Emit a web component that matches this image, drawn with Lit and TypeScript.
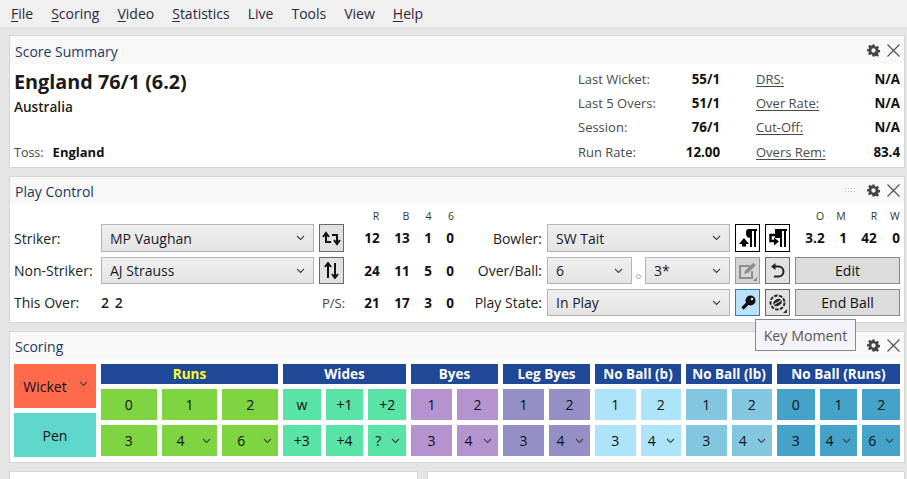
import { LitElement, html, css } from "lit";
import { customElement } from "lit/decorators.js";

const chev = html`<svg class="chev" width="9" height="6" viewBox="0 0 9 6"><path d="M1 1l3.5 3.5L8 1" fill="none" stroke="#444" stroke-width="1.1"/></svg>`;
const gear = html`<svg width="13" height="13" viewBox="0 0 24 24"><path fill="#444" fill-rule="evenodd" d="M10 1h4l.6 3.2 2 .8 2.700-1.800 2.800 2.800-1.800 2.700.8 2 3.200.6v4l-3.200.6-.8 2 1.800 2.700-2.800 2.800-2.700-1.800-2 .8L14 23h-4l-.6-3.200-2-.8-2.700 1.800-2.800-2.800 1.800-2.700-.8-2L0 13.700v-4l3.200-.6.8-2L2.200 4.400 5 1.600l2.700 1.800 1.700-.8zM12 8a4 4 0 100 8 4 4 0 000-8z"/></svg>`;
const closeX = html`<svg width="13" height="13" viewBox="0 0 13 13"><path d="M.5.500l12 12M12.500.500l-12 12" stroke="#555" stroke-width="1.200" fill="none"/></svg>`;

const swap = html`<svg width="19" height="15" viewBox="0 0 19 15"><path d="M1 6l3-4 3 4M4 3v8h5M18 9l-3 4-3-4M15 12V4h-5" fill="none" stroke="#111" stroke-width="2"/></svg>`;
const updown = html`<svg width="15" height="17" viewBox="0 0 15 17"><path d="M1 5l3-4 3 4M4 2v14M14 12l-3 4-3-4M11 15V1" fill="none" stroke="#111" stroke-width="2"/></svg>`;
const bowlA = html`<svg width="23" height="26" viewBox="0 0 23 26"><path fill="#000" d="M10 4h11v2h-1v16h-2V6h-2v16h-2V13a4.500 4.500 0 01-4-4.500V7a3 3 0 012-3z"/><path fill="#000" d="M8 13l5 6h-3v2.500H6V19H3z"/></svg>`;
const bowlB = html`<svg width="23" height="26" viewBox="0 0 23 26"><path fill="#000" d="M9 4h12v2h-1v16h-2V6h-2v16h-2V13H9z"/><path d="M9 10H4.500v6H8" fill="none" stroke="#000" stroke-width="2.400"/><path fill="#000" d="M8 12.500l5 4-5 4z"/></svg>`;
const editIc = html`<svg width="19" height="18" viewBox="0 0 19 18"><path d="M12 4H2v12h12V9" fill="none" stroke="#8d8d8d" stroke-width="2"/><path d="M6 12l1-3 8-8 3 2-8 8z" fill="#8d8d8d"/></svg>`;
const undoIc = html`<svg width="17" height="17" viewBox="0 0 17 17"><path d="M5 4.500h4.500a5 5 0 110 10H5" fill="none" stroke="#222" stroke-width="2"/><path d="M6.500 1v7L2 4.500z" fill="#222"/></svg>`;
const keyIc = html`<svg width="16" height="16" viewBox="0 0 16 16"><path d="M8 8L2.500 13.500" stroke="#111" stroke-width="3.200" fill="none"/><circle cx="10.500" cy="5.500" r="5" fill="#111"/><circle cx="12" cy="4" r="1.300" fill="#bce2fa"/></svg>`;
const dialIc = html`<svg width="17" height="17" viewBox="0 0 17 17"><circle cx="8.500" cy="8.500" r="7" fill="none" stroke="#222" stroke-width="1.900" stroke-dasharray="3.500 1.400"/><ellipse cx="8.500" cy="8.500" rx="4.500" ry="3.300" fill="#222" transform="rotate(-30 8.500 8.500)"/><path d="M5 10.500L12 6.500" stroke="#ccc" stroke-width="1.100"/></svg>`;

@customElement("app-root")
export class AppRoot extends LitElement {
  static styles = css`
    :host { display: block; width: 907px; height: 479px; overflow: hidden; position: relative; background: #e5e5e5; font-family: "Open Sans", "Noto Sans", sans-serif; font-size: 14px; color: #222; }
    .menu { height: 27px; background: #f0f0f0; display: flex; align-items: center; gap: 18px; padding-left: 11px; font-size: 14px; color: #2a2a3a; }
    .menu u { text-underline-offset: 2px; }
    .panels { display: flex; flex-direction: column; gap: 8px; padding: 8px 2px 0 9px; }
    .panel { background: #fff; border: 1px solid #d6d6d6; box-sizing: border-box; }
    .head { height: 27px; background: #f8f8f8; display: flex; align-items: center; padding: 0 4px 0 5px; gap: 7px; font-size: 14px; color: #1c3a5e; }
    .summary .head { height: 28px; }
    .head .title { flex: 1; margin-top: 2px; }
    .grip { width: 13px; height: 7px; background: radial-gradient(#bbb 40%, transparent 45%) 0 0 / 3px 3px; margin-right: 3px; }
    .summary { height: 133px; }
    .sumbody { height: 103px; display: flex; padding: 0 4px; box-sizing: border-box; }
    .left { flex: 1; display: flex; flex-direction: column; }
    .big { font-size: 19.800px; font-weight: 700; line-height: 24px; margin-top: 6px; color: #1a1a1a; }
    .aus { font-size: 13.600px; font-weight: 600; margin-top: 3px; line-height: 20px; }
    .toss { margin-top: auto; margin-bottom: 4px; display: flex; gap: 9px; height: 22px; align-items: center; color: #444; font-size: 12.500px; }
    .toss b { color: #111; font-weight: 700; font-size: 13px; }
    .stats { display: grid; grid-template-columns: 100px 42px 148px 32px; grid-auto-rows: 24.400px; margin-top: 2.600px; color: #4a4a4a; font-size: 13px; }
    .stats > * { line-height: 24.400px; white-space: nowrap; }
    .stats b { color: #111; text-align: right; font-weight: 700; font-size: 13.300px; }
    .stats u { text-underline-offset: 2px; padding-left: 36px; }
    .play { height: 147px; }
    .pbody { position: relative; height: 118px; padding: 20px 0 0 4px; box-sizing: border-box; display: grid; grid-template-columns: 82px 213px 25px 113px 75px 183px 25px 25px 105px; grid-template-rows: 28px 27px 27px; gap: 5px; align-items: center; font-size: 14px; }
    .sel { height: 100%; box-sizing: border-box; border: 1px solid #b4b4b4; background: linear-gradient(#efefef, #e4e4e4); display: flex; align-items: center; justify-content: space-between; padding: 0 8px; color: #1a1a2a; font-size: 14px; }
    .duo { display: grid; grid-template-columns: 85px 13px 85px; align-items: center; height: 100%; }
    .dot { width: 3px; height: 3px; border: 1px solid #aaa; border-radius: 50%; justify-self: center; margin-top: 11px; }
    .ib { height: 100%; box-sizing: border-box; border: 1px solid #6a6a6a; background: #e1e1e1; display: flex; align-items: center; justify-content: center; position: relative; }
    .ib.white { background: #fff; border-color: #000; }
    .ib.blue { background: #bce2fa; border-color: #2f7db9; }
    .ib.off { border-color: #9a9a9a; background: #d5d5d5; }
    .tri::after { content: ""; position: absolute; right: 2px; bottom: 2px; border: 2.500px solid transparent; border-right-color: #333; border-bottom-color: #333; }
    .tri.off::after { border-right-color: #888; border-bottom-color: #888; }
    .act { height: 100%; box-sizing: border-box; border: 1px solid #8a8a8a; background: #dcdcdc; display: flex; align-items: center; justify-content: center; font-size: 14px; color: #111; }
    .nr { display: grid; grid-template-columns: 28px 32px 20px 24px; padding-left: 9px; text-align: center; font-weight: 700; font-size: 13.500px; color: #111; }
    .nb { display: grid; grid-template-columns: 40px 16px 36px 18px; text-align: center; font-weight: 700; font-size: 13.500px; color: #111; }
    .heads { position: absolute; top: 5px; font-size: 10.500px; line-height: 14px; color: #333; display: grid; text-align: center; }
    .lh1 { left: 351px; grid-template-columns: 30px 30px 15px 30px; }
    .lh2 { left: 800px; grid-template-columns: 20px 22px 38px 14px; }
    .lh2 .r3 { padding-left: 6px; }
    .lh2 .w { text-align: left; }
    .lab { white-space: nowrap; }
    .rt { text-align: right; white-space: nowrap; }
    .ps { padding-left: 3px; font-size: 13px; color: #444; white-space: nowrap; }
    .over { font-weight: 600; letter-spacing: 1px; }
    .scoring { height: 132px; }
    .sbody { height: 103px; padding: 5px 0 0 4px; display: flex; gap: 5px; box-sizing: border-box; }
    .side { width: 82px; display: grid; grid-template-rows: 44px 44px; row-gap: 5px; }
    .big-btn { display: flex; align-items: center; justify-content: center; font-size: 14px; color: #111; position: relative; }
    .big-btn .chev { position: absolute; right: 8px; top: 17px; }
    .wicket { background: #ff6a4d; padding-right: 20px; }
    .pen { background: #5fd6cc; }
    .group { display: grid; grid-template-rows: 20px 31px 31px; gap: 5px; }
    .gh { grid-column: 1 / -1; background: #1f4896; color: #fff; font-weight: 700; font-size: 13.500px; display: flex; align-items: center; justify-content: center; white-space: nowrap; }
    .gh.y { color: #ffff2e; }
    .cb { display: flex; align-items: center; justify-content: center; font-size: 14px; color: #111; position: relative; }
    .cb.m { padding-right: 18px; }
    .cb .chev { position: absolute; right: 6px; top: 13px; }
    .bottom { display: flex; gap: 9px; }
    .bottom .panel { height: 20px; }
    .bl { width: 409px; }
    .br { flex: 1; }
    .tip { position: absolute; left: 755px; top: 319px; width: 101px; height: 32px; box-sizing: border-box; border: 1px solid #8a8a8a; background: #f4f4fa; color: #575757; display: flex; align-items: center; justify-content: center; font-size: 14.200px; }
  `;

  head(title: string, grip = false) {
    return html`<div class="head"><span class="title">${title}</span>${grip ? html`<span class="grip"></span>` : ""}${gear}${closeX}</div>`;
  }

  group(name: string, w: number, cols: number, color: string, row1: string[], row2: string[], y = false) {
    const cell = (t: string) => {
      const m = t.endsWith("v");
      const label = m ? t.slice(0, -1) : t;
      return html`<div class="cb ${m ? "m" : ""}" style="background:${color}">${label}${m ? chev : ""}</div>`;
    };
    return html`<div class="group" style="width:${w}px;grid-template-columns:repeat(${cols},1fr)">
      <div class="gh ${y ? "y" : ""}">${name}</div>
      ${row1.map(cell)}${row2.map(cell)}
    </div>`;
  }

  render() {
    return html`
      <div class="menu">
        <span><u>F</u>ile</span><span><u>S</u>coring</span><span><u>V</u>ideo</span><span><u>S</u>tatistics</span><span>Live</span><span>Tools</span><span>View</span><span><u>H</u>elp</span>
      </div>
      <div class="panels">
        <section class="panel summary">
          ${this.head("Score Summary")}
          <div class="sumbody">
            <div class="left">
              <div class="big">England 76/1 (6.2)</div>
              <div class="aus">Australia</div>
              <div class="toss"><span>Toss:</span><b>England</b></div>
            </div>
            <div class="stats">
              <span>Last Wicket:</span><b>55/1</b><u>DRS:</u><b>N/A</b>
              <span>Last 5 Overs:</span><b>51/1</b><u>Over Rate:</u><b>N/A</b>
              <span>Session:</span><b>76/1</b><u>Cut-Off:</u><b>N/A</b>
              <span>Run Rate:</span><b>12.00</b><u>Overs Rem:</u><b>83.4</b>
            </div>
          </div>
        </section>
        <section class="panel play">
          ${this.head("Play Control", true)}
          <div class="pbody">
            <div class="heads lh1"><span>R</span><span>B</span><span>4</span><span>6</span></div>
            <div class="heads lh2"><span>O</span><span>M</span><span class="r3">R</span><span class="w">W</span></div>

            <span class="lab">Striker:</span>
            <div class="sel">MP Vaughan ${chev}</div>
            <div class="ib">${swap}</div>
            <div class="nr"><span>12</span><span>13</span><span>1</span><span>0</span></div>
            <span class="rt">Bowler:</span>
            <div class="sel">SW Tait ${chev}</div>
            <div class="ib white">${bowlA}</div>
            <div class="ib white">${bowlB}</div>
            <div class="nb"><span>3.2</span><span>1</span><span>42</span><span>0</span></div>

            <span class="lab">Non-Striker:</span>
            <div class="sel">AJ Strauss ${chev}</div>
            <div class="ib">${updown}</div>
            <div class="nr"><span>24</span><span>11</span><span>5</span><span>0</span></div>
            <span class="rt">Over/Ball:</span>
            <div class="duo">
              <div class="sel">6 ${chev}</div><span class="dot"></span><div class="sel">3* ${chev}</div>
            </div>
            <div class="ib off tri">${editIc}</div>
            <div class="ib">${undoIc}</div>
            <div class="act">Edit</div>

            <span class="lab">This Over:</span>
            <span class="over">2 2</span>
            <span class="ps">P/S:</span>
            <div class="nr"><span>21</span><span>17</span><span>3</span><span>0</span></div>
            <span class="rt">Play State:</span>
            <div class="sel">In Play ${chev}</div>
            <div class="ib blue">${keyIc}</div>
            <div class="ib tri">${dialIc}</div>
            <div class="act">End Ball</div>
          </div>
        </section>
        <section class="panel scoring">
          ${this.head("Scoring")}
          <div class="sbody">
            <div class="side">
              <div class="big-btn wicket">Wicket ${chev}</div>
              <div class="big-btn pen">Pen</div>
            </div>
            ${this.group("Runs", 177, 3, "#7fd442", ["0", "1", "2"], ["3", "4v", "6v"], true)}
            ${this.group("Wides", 123, 3, "#5ae3a6", ["w", "+1", "+2"], ["+3", "+4", "?v"])}
            ${this.group("Byes", 87, 2, "#b593cf", ["1", "2"], ["3", "4v"])}
            ${this.group("Leg Byes", 87, 2, "#9490c5", ["1", "2"], ["3", "4v"])}
            ${this.group("No Ball (b)", 86, 2, "#ade4fa", ["1", "2"], ["3", "4v"])}
            ${this.group("No Ball (lb)", 86, 2, "#82c6e0", ["1", "2"], ["3", "4v"])}
            ${this.group("No Ball (Runs)", 123, 3, "#45a2c8", ["0", "1", "2"], ["3", "4v", "6v"])}
          </div>
        </section>
        <div class="bottom">
          <section class="panel bl"></section>
          <section class="panel br"></section>
        </div>
      </div>
      <div class="tip">Key Moment</div>
    `;
  }
}
